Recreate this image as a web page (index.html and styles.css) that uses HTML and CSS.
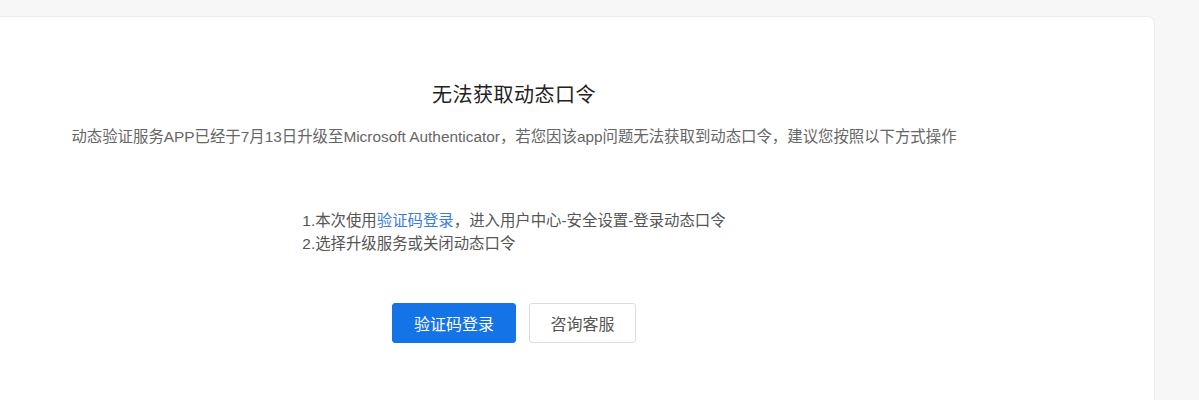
FILE: index.html
```html
<!DOCTYPE html>
<html lang="zh-CN">
<head>
<meta charset="utf-8">
<title>无法获取动态口令</title>
<link rel="stylesheet" href="styles.css">
</head>
<body>
<div class="page">
  <div class="card">
    <div class="content">
      <h1 class="title">无法获取动态口令</h1>
      <p class="desc">动态验证服务APP已经于7月13日升级至Microsoft Authenticator，若您因该app问题无法获取到动态口令，建议您按照以下方式操作</p>
      <div class="steps">
        <div class="step">1.本次使用<a class="link" href="#">验证码登录</a>，进入用户中心-安全设置-登录动态口令</div>
        <div class="step">2.选择升级服务或关闭动态口令</div>
      </div>
      <div class="actions">
        <button class="btn btn-primary" type="button">验证码登录</button>
        <button class="btn btn-default" type="button">咨询客服</button>
      </div>
    </div>
  </div>
</div>
</body>
</html>
```
FILE: styles.css
```css
html, body {
  margin: 0;
  padding: 0;
  background: #f7f7f7;
  font-family: "Liberation Sans", "Noto Sans CJK SC", sans-serif;
}
.page {
  padding-top: 16px;
  height: 384px;
  overflow: hidden;
}
.card {
  width: 1155px;
  height: 420px;
  background: #fff;
  border: 1px solid #ebebeb;
  border-left: none;
  border-radius: 0 7px 0 0;
  box-sizing: border-box;
  padding-right: 126px;
}
.content {
  display: flex;
  flex-direction: column;
  align-items: center;
  padding-top: 64px;
}
.title {
  margin: 0;
  font-size: 20px;
  line-height: 28px;
  font-weight: normal;
  color: #222;
  letter-spacing: 0.5px;
}
.desc {
  margin: 17px 0 0;
  font-size: 15.4px;
  line-height: 22px;
  color: #666;
  white-space: nowrap;
}
.steps {
  margin-top: 61px;
  font-size: 15.4px;
  line-height: 23px;
  color: #555;
  text-align: left;
}
.link {
  color: #3a7be0;
  text-decoration: none;
}
.actions {
  margin-top: 48px;
  display: flex;
  gap: 13px;
}
.btn {
  height: 40px;
  font-size: 16px;
  font-family: inherit;
  border-radius: 3px;
  cursor: pointer;
  box-sizing: border-box;
  padding: 0;
}
.btn-primary {
  width: 124px;
  background: #1473e6;
  border: 1px solid #1473e6;
  color: #fff;
}
.btn-default {
  width: 107px;
  background: #fff;
  border: 1px solid #dcdcdc;
  color: #555;
}
```
